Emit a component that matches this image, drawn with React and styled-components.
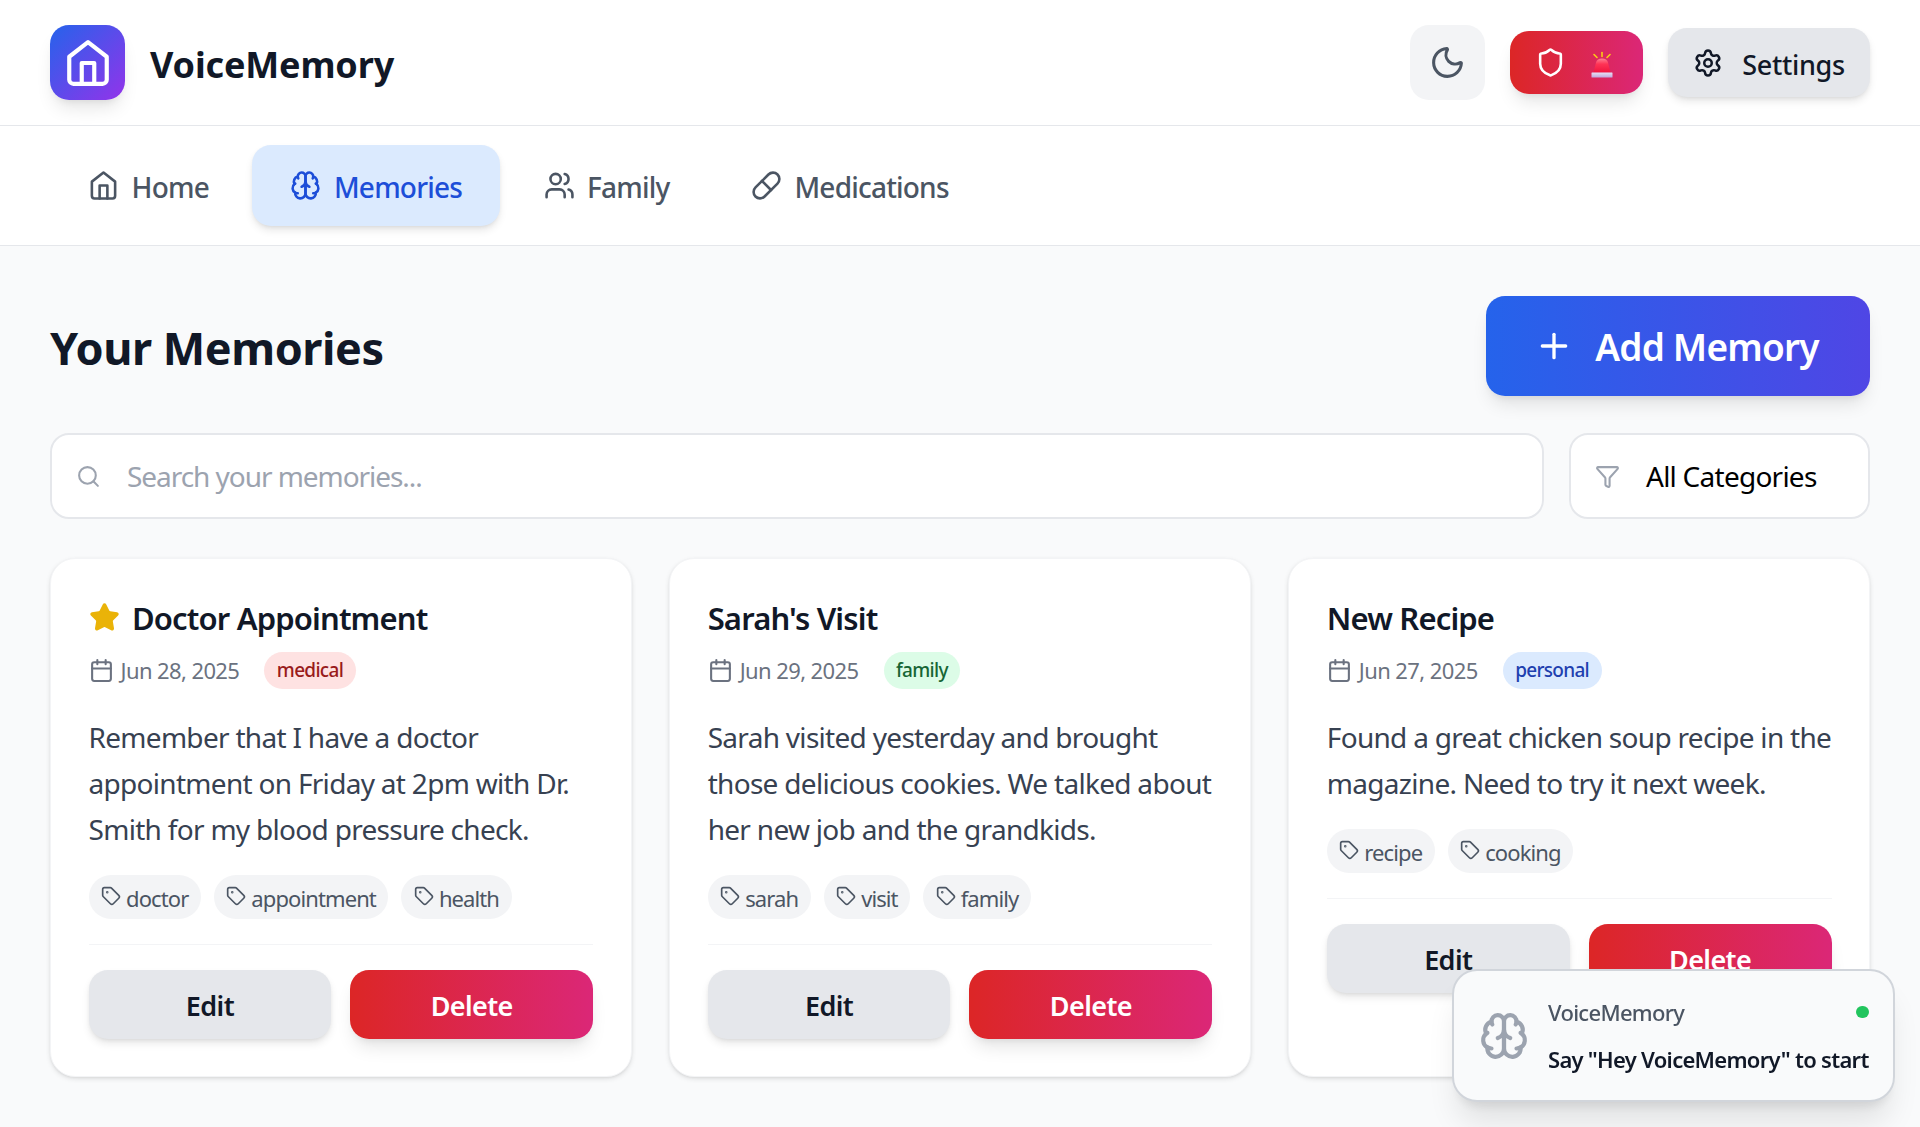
import styled, { createGlobalStyle } from 'styled-components';
import {
  Calendar,
  Filter,
  Moon,
  Pill,
  Plus,
  Search,
  Settings,
  Shield,
  Star,
  Tag,
  Users,
} from 'lucide-react';

const GlobalStyle = createGlobalStyle`
  * {
    box-sizing: border-box;
  }

  html,
  body {
    margin: 0;
    height: 100%;
    background: #f9fafb;
    font-family: 'Noto Sans', 'Open Sans', sans-serif;
    color: #111827;
  }

  button,
  input {
    font-family: inherit;
  }
`;

const Header = styled.header`
  display: flex;
  align-items: center;
  justify-content: space-between;
  height: 126px;
  padding: 0 50px;
  background: #fff;
  border-bottom: 1.5px solid #e5e7eb;
`;

const Brand = styled.div`
  display: flex;
  align-items: center;
  gap: 25px;
`;

const LogoBox = styled.div`
  width: 75px;
  height: 75px;
  display: flex;
  align-items: center;
  justify-content: center;
  border-radius: 19px;
  color: #fff;
  background: linear-gradient(135deg, #2563eb, #9333ea);
  box-shadow: 0 12px 18px -4px rgba(0, 0, 0, 0.1), 0 5px 8px -5px rgba(0, 0, 0, 0.1);
`;

const BrandName = styled.h1`
  margin: 0;
  padding-top: 3px;
  font-size: 36px;
  font-weight: 700;
  letter-spacing: -0.15px;
`;

const Actions = styled.div`
  display: flex;
  align-items: center;
  gap: 25px;
`;

const ThemeButton = styled.button`
  width: 75px;
  height: 75px;
  display: flex;
  align-items: center;
  justify-content: center;
  padding: 0;
  border: 0;
  border-radius: 19px;
  background: #f3f4f6;
  color: #4b5563;
`;

const AlertButton = styled.button`
  width: 133px;
  height: 63px;
  display: flex;
  align-items: center;
  gap: 25px;
  padding: 0 0 0 25px;
  border: 0;
  border-radius: 19px;
  color: #fff;
  background: linear-gradient(90deg, #dc2626, #db2777);
  box-shadow: 0 12px 18px -4px rgba(0, 0, 0, 0.1), 0 5px 8px -5px rgba(0, 0, 0, 0.1);
`;

const SettingsButton = styled.button`
  width: 202px;
  height: 69px;
  display: flex;
  align-items: center;
  justify-content: center;
  gap: 19px;
  padding: 0;
  border: 0;
  border-radius: 19px;
  background: #e5e7eb;
  color: #111827;
  font-size: 27px;
  font-weight: 500;
  letter-spacing: -0.35px;
  box-shadow: 0 5px 8px -1px rgba(0, 0, 0, 0.1), 0 2px 5px -2px rgba(0, 0, 0, 0.1);
`;

const SettingsLabel = styled.span`
  padding-top: 3px;
`;

const Nav = styled.nav`
  display: flex;
  align-items: center;
  gap: 5.5px;
  height: 120px;
  padding: 0 50px;
  background: #fff;
  border-bottom: 1.5px solid #e5e7eb;
`;

const NavItem = styled.a`
  display: flex;
  align-items: center;
  gap: 12.5px;
  height: 81px;
  padding: 0 38px;
  border-radius: 19px;
  font-size: 28px;
  font-weight: 500;
  letter-spacing: -0.8px;
  color: ${(p) => (p.$active ? '#1d4ed8' : '#4b5563')};
  background: ${(p) => (p.$active ? '#dbeafe' : 'transparent')};
  box-shadow: ${(p) =>
    p.$active ? '0 5px 8px -1px rgba(0, 0, 0, 0.1), 0 2px 5px -2px rgba(0, 0, 0, 0.1)' : 'none'};
`;

const NavLabel = styled.span`
  padding-top: 2px;
`;

const Main = styled.main`
  padding: 50px 50px 0;
`;

const TitleRow = styled.div`
  display: flex;
  align-items: center;
  justify-content: space-between;
  margin-bottom: 37px;
`;

const PageTitle = styled.h2`
  margin: 0;
  padding-top: 2px;
  font-size: 45px;
  font-weight: 700;
  letter-spacing: -0.45px;
`;

const AddButton = styled.button`
  width: 384px;
  height: 100px;
  display: flex;
  align-items: center;
  justify-content: center;
  gap: 21px;
  padding: 0 3px 0 0;
  border: 0;
  border-radius: 19px;
  color: #fff;
  font-size: 37px;
  font-weight: 600;
  letter-spacing: -0.8px;
  background: linear-gradient(90deg, #2563eb, #4f46e5);
  box-shadow: 0 12px 18px -4px rgba(0, 0, 0, 0.1), 0 5px 8px -5px rgba(0, 0, 0, 0.1);
`;

const FilterRow = styled.div`
  display: flex;
  gap: 25px;
  margin-bottom: 39px;
`;

const Field = styled.div`
  display: flex;
  align-items: center;
  gap: 26px;
  height: 86px;
  padding: 0 24px;
  background: #fff;
  border: 2px solid #e5e7eb;
  border-radius: 19px;
  color: #9ca3af;
  font-size: 28px;
  letter-spacing: ${(p) => (p.$grow ? '-1.05px' : '-0.75px')};
  flex: ${(p) => (p.$grow ? '1' : '0 0 301px')};
`;

const CategoryLabel = styled.span`
  color: #000;
`;

const CardGrid = styled.div`
  display: grid;
  grid-template-columns: repeat(3, 1fr);
  gap: 37.5px;
`;

const Card = styled.article`
  padding: 37.5px;
  height: 519px;
  background: #fff;
  border: 1.25px solid #f3f4f6;
  border-radius: 25px;
  box-shadow: 0 2px 5px 0 rgba(0, 0, 0, 0.1), 0 1px 3px -1px rgba(0, 0, 0, 0.1);
`;

const CardTitle = styled.h3`
  display: flex;
  align-items: center;
  gap: 12.5px;
  height: 42px;
  margin: 0 0 13px;
  font-size: 31px;
  font-weight: 600;
  letter-spacing: -0.85px;
`;

const Meta = styled.div`
  display: flex;
  align-items: center;
  gap: 25px;
  height: 37px;
  margin-bottom: 25px;
`;

const DateText = styled.span`
  display: flex;
  align-items: center;
  gap: 7px;
  color: #6b7280;
  font-size: 22px;
  letter-spacing: -0.6px;
`;

const Category = styled.span`
  height: 37px;
  display: flex;
  align-items: center;
  padding: 0 12.5px;
  border-radius: 999px;
  font-size: 19px;
  font-weight: 500;
  letter-spacing: -0.7px;
  color: ${(p) => p.$fg};
  background: ${(p) => p.$bg};
`;

const Body = styled.p`
  margin: 0 -5px 23px 0;
  font-size: 28px;
  line-height: 46px;
  letter-spacing: -0.7px;
  color: #374151;
`;

const Tags = styled.div`
  display: flex;
  gap: 13px;
  padding-bottom: 25px;
  margin-bottom: 25px;
  border-bottom: 1.5px solid #f3f4f6;
`;

const TagChip = styled.span`
  height: 44px;
  display: flex;
  align-items: center;
  gap: 5px;
  padding: 2px 12.5px 0;
  border-radius: 999px;
  background: #f3f4f6;
  color: #4b5563;
  font-size: 22px;
  letter-spacing: -0.9px;

  svg {
    margin-top: -4px;
  }
`;

const CardActions = styled.div`
  display: grid;
  grid-template-columns: 1fr 1fr;
  gap: 19px;
`;

const CardButton = styled.button`
  height: 69px;
  padding: 2px 0 0;
  border: 0;
  border-radius: 19px;
  font-size: 27px;
  font-weight: 600;
  letter-spacing: -0.6px;
  color: ${(p) => (p.$danger ? '#fff' : '#111827')};
  background: ${(p) => (p.$danger ? 'linear-gradient(90deg, #dc2626, #db2777)' : '#e5e7eb')};
  box-shadow: ${(p) =>
    p.$danger
      ? '0 12px 18px -4px rgba(0, 0, 0, 0.1), 0 5px 8px -5px rgba(0, 0, 0, 0.1)'
      : '0 5px 8px -1px rgba(0, 0, 0, 0.1), 0 2px 5px -2px rgba(0, 0, 0, 0.1)'};
`;

const Toast = styled.aside`
  position: fixed;
  right: 25px;
  bottom: 25px;
  width: 443px;
  height: 133px;
  display: flex;
  align-items: center;
  gap: 19px;
  padding: 0 27px 0 25px;
  background: #f9fafb;
  border: 2.5px solid #d1d5db;
  border-radius: 25px;
  box-shadow: 0 25px 31px -6px rgba(0, 0, 0, 0.1), 0 10px 12px -7px rgba(0, 0, 0, 0.1);
`;

const ToastBrain = styled.div`
  color: #9ca3af;
  display: flex;
`;

const ToastText = styled.div`
  flex: 1;
`;

const ToastHead = styled.div`
  display: flex;
  align-items: center;
  justify-content: space-between;
  margin-bottom: 17px;
  color: #4b5563;
  font-size: 22px;
  font-weight: 500;
  letter-spacing: -0.7px;
`;

const Dot = styled.span`
  width: 12.5px;
  height: 12.5px;
  border-radius: 50%;
  background: #22c55e;
`;

const ToastMessage = styled.div`
  font-size: 22px;
  font-weight: 600;
  letter-spacing: -0.72px;
  white-space: nowrap;
`;

function HomeIcon({ size, width = 2 }) {
  return (
    <svg width={size} height={size} viewBox="0 0 24 24" fill="none" stroke="currentColor" strokeWidth={width} strokeLinecap="round" strokeLinejoin="round">
      <path d="m3 9 9-7 9 7v11a2 2 0 0 1-2 2H5a2 2 0 0 1-2-2z" />
      <polyline points="9 22 9 12 15 12 15 22" />
    </svg>
  );
}

function BrainIcon({ size }) {
  return (
    <svg width={size} height={size} viewBox="0 0 24 24" fill="none" stroke="currentColor" strokeWidth="2" strokeLinecap="round" strokeLinejoin="round">
      <path d="M12 5a3 3 0 1 0-5.997.125 4 4 0 0 0-2.526 5.77 4 4 0 0 0 .556 6.588A4 4 0 1 0 12 18Z" />
      <path d="M12 5a3 3 0 1 1 5.997.125 4 4 0 0 1 2.526 5.77 4 4 0 0 1-.556 6.588A4 4 0 1 1 12 18Z" />
      <path d="M15 13a4.5 4.5 0 0 1-3-4 4.5 4.5 0 0 1-3 4" />
      <path d="M17.599 6.5a3 3 0 0 0 .399-1.375" />
      <path d="M6.003 5.125A3 3 0 0 0 6.401 6.5" />
      <path d="M3.477 10.896a4 4 0 0 1 .585-.396" />
      <path d="M19.938 10.5a4 4 0 0 1 .585.396" />
      <path d="M6 18a4 4 0 0 1-1.967-.516" />
      <path d="M19.967 17.484A4 4 0 0 1 18 18" />
    </svg>
  );
}

function SirenIcon() {
  return (
    <svg width="26" height="30" viewBox="0 0 26 30">
      <defs>
        <linearGradient id="sirenDome" x1="0" y1="0" x2="0" y2="1">
          <stop offset="0" stopColor="#ff7f92" />
          <stop offset="0.4" stopColor="#ff3355" />
          <stop offset="1" stopColor="#f0143f" />
        </linearGradient>
        <linearGradient id="sirenBase" x1="0" y1="0" x2="0" y2="1">
          <stop offset="0" stopColor="#e9e0f4" />
          <stop offset="1" stopColor="#c0a6dc" />
        </linearGradient>
      </defs>
      <path d="M2.5 24.5 L5 14.5 Q6 10.5 11 10.5 Q16 10.5 17 14.5 L19.5 24.5 Z" fill="url(#sirenDome)" />
      <rect x="0.5" y="24.5" width="21" height="5" rx="0.5" fill="url(#sirenBase)" />
      <g stroke="#facc15" strokeWidth="1.6" strokeLinecap="round">
        <line x1="11" y1="4.5" x2="11" y2="8.5" />
        <line x1="3" y1="6.5" x2="6" y2="9.5" />
        <line x1="19" y1="6.5" x2="16" y2="9.5" />
      </g>
    </svg>
  );
}

const memories = [
  {
    title: 'Doctor Appointment',
    starred: true,
    date: 'Jun 28, 2025',
    category: 'medical',
    fg: '#991b1b',
    bg: '#fee2e2',
    body: 'Remember that I have a doctor appointment on Friday at 2pm with Dr. Smith for my blood pressure check.',
    tags: ['doctor', 'appointment', 'health'],
  },
  {
    title: "Sarah's Visit",
    date: 'Jun 29, 2025',
    category: 'family',
    fg: '#166534',
    bg: '#dcfce7',
    body: 'Sarah visited yesterday and brought those delicious cookies. We talked about her new job and the grandkids.',
    tags: ['sarah', 'visit', 'family'],
  },
  {
    title: 'New Recipe',
    date: 'Jun 27, 2025',
    category: 'personal',
    fg: '#1e40af',
    bg: '#dbeafe',
    body: 'Found a great chicken soup recipe in the magazine. Need to try it next week.',
    tags: ['recipe', 'cooking'],
  },
];

export default function App() {
  return (
    <>
      <GlobalStyle />
      <Header>
        <Brand>
          <LogoBox>
            <HomeIcon size={50} />
          </LogoBox>
          <BrandName>VoiceMemory</BrandName>
        </Brand>
        <Actions>
          <ThemeButton>
            <Moon size={37} />
          </ThemeButton>
          <AlertButton>
            <Shield size={31} />
            <SirenIcon />
          </AlertButton>
          <SettingsButton>
            <Settings size={30} />
            <SettingsLabel>Settings</SettingsLabel>
          </SettingsButton>
        </Actions>
      </Header>
      <Nav>
        <NavItem>
          <HomeIcon size={31} />
          <NavLabel>Home</NavLabel>
        </NavItem>
        <NavItem $active>
          <BrainIcon size={31} />
          <NavLabel>Memories</NavLabel>
        </NavItem>
        <NavItem>
          <Users size={31} />
          <NavLabel>Family</NavLabel>
        </NavItem>
        <NavItem>
          <Pill size={31} />
          <NavLabel>Medications</NavLabel>
        </NavItem>
      </Nav>
      <Main>
        <TitleRow>
          <PageTitle>Your Memories</PageTitle>
          <AddButton>
            <Plus size={40} />
            Add Memory
          </AddButton>
        </TitleRow>
        <FilterRow>
          <Field $grow>
            <Search size={25} />
            Search your memories...
          </Field>
          <Field>
            <Filter size={25} />
            <CategoryLabel>All Categories</CategoryLabel>
          </Field>
        </FilterRow>
        <CardGrid>
          {memories.map((memory) => (
            <Card key={memory.title}>
              <CardTitle>
                {memory.starred && <Star size={31} fill="#eab308" color="#eab308" />}
                {memory.title}
              </CardTitle>
              <Meta>
                <DateText>
                  <Calendar size={25} />
                  {memory.date}
                </DateText>
                <Category $fg={memory.fg} $bg={memory.bg}>
                  {memory.category}
                </Category>
              </Meta>
              <Body>{memory.body}</Body>
              <Tags>
                {memory.tags.map((tag) => (
                  <TagChip key={tag}>
                    <Tag size={20} />
                    {tag}
                  </TagChip>
                ))}
              </Tags>
              <CardActions>
                <CardButton>Edit</CardButton>
                <CardButton $danger>Delete</CardButton>
              </CardActions>
            </Card>
          ))}
        </CardGrid>
      </Main>
      <Toast>
        <ToastBrain>
          <BrainIcon size={50} />
        </ToastBrain>
        <ToastText>
          <ToastHead>
            VoiceMemory
            <Dot />
          </ToastHead>
          <ToastMessage>Say "Hey VoiceMemory" to start</ToastMessage>
        </ToastText>
      </Toast>
    </>
  );
}
